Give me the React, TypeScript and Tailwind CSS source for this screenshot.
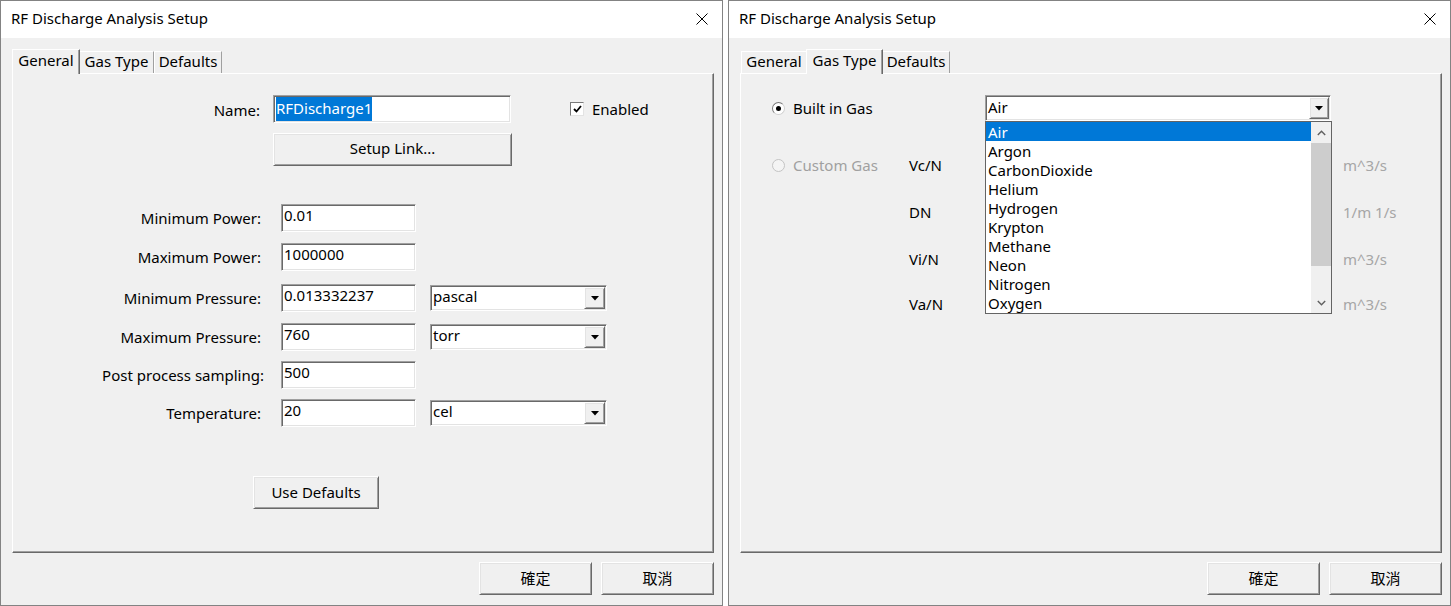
import React from 'react';

// classic win32 3d borders
const sunken =
  'border border-t-[#a0a0a0] border-l-[#a0a0a0] border-r-white border-b-white shadow-[inset_1px_1px_0_#696969,inset_-1px_-1px_0_#e3e3e3]';
const raised =
  'bg-[#f0f0f0] border border-t-white border-l-white border-r-[#696969] border-b-[#696969] shadow-[inset_1px_1px_0_#e3e3e3,inset_-1px_-1px_0_#a0a0a0]';

const Arrow = () => (
  <svg width="8" height="5" viewBox="0 0 8 5">
    <path d="M0 0h8L4 4.5z" fill="#000" />
  </svg>
);

const Field = ({ value, w }: { value: string; w: string }) => (
  <div className={`${sunken} bg-white h-[28px] ${w} pl-[2px] leading-[20px]`}>{value}</div>
);

const Select = ({ value }: { value: string }) => (
  <div className={`${sunken} bg-white h-[26px] w-[177px] flex p-[1px]`}>
    <span className="flex-1 pl-[1px] leading-[18px]">{value}</span>
    <span className={`${raised} w-[21px] flex items-center justify-center pt-[1px]`}>
      <Arrow />
    </span>
  </div>
);

const Radio = ({ checked, disabled }: { checked?: boolean; disabled?: boolean }) => (
  <span
    className={`w-[13px] h-[13px] rounded-full border flex items-center justify-center ${
      disabled ? 'border-[#c4c4c4] bg-[#f4f4f4]' : 'border-t-[#7a7a7a] border-l-[#7a7a7a] border-r-[#d0d0d0] border-b-[#d0d0d0] bg-white'
    }`}
  >
    {checked && <span className="w-[5px] h-[5px] rounded-full bg-black" />}
  </span>
);

function Tabs({ active }: { active: number }) {
  const base = 'h-[22px] border-t border-l border-white border-r border-r-[#a0a0a0] text-center leading-[19px]';
  const sel =
    'relative z-10 -mx-[1px] -mb-[1px] h-[25px] bg-[#f0f0f0] border-t border-l border-white border-r border-r-[#696969] shadow-[inset_-1px_0_0_#a0a0a0] text-center leading-[21px]';
  return (
    <div className="flex items-end h-[24px] pl-[1px]">
      <div className={active === 0 ? `${sel} w-[68px]` : `${base} w-[66px]`}>General</div>
      <div className={active === 1 ? `${sel} w-[77px]` : `${base} w-[75px]`}>Gas Type</div>
      <div className={active === 2 ? `${sel} w-[70px]` : `${base} w-[68px]`}>Defaults</div>
    </div>
  );
}

function Dialog({ active, children }: { active: number; children: React.ReactNode }) {
  return (
    <div className="w-[723px] h-[606px] border border-[#838383] bg-[#f0f0f0] flex flex-col shrink-0">
      <div className="h-[37px] bg-white flex items-center justify-between pl-[10px] pr-[14px] pb-[2px] text-[15px]">
        <span>RF Discharge Analysis Setup</span>
        <svg width="12" height="12" viewBox="0 0 12 12">
          <path d="M0.5 0.5l11 11M11.5 0.5l-11 11" stroke="#000" strokeWidth="1" />
        </svg>
      </div>
      <div className="pl-[11px] pr-[8px] pt-[11px]">
        <Tabs active={active} />
        <div className="relative h-[480px] border border-t-white border-l-white border-r-[#696969] border-b-[#696969] shadow-[inset_-1px_-1px_0_#a0a0a0]">
          {children}
        </div>
        <div className="flex justify-end gap-[9px] mt-[9px]">
          <button className={`${raised} w-[113px] h-[33px] leading-[20px] pb-[2px]`}>確定</button>
          <button className={`${raised} w-[113px] h-[33px] leading-[20px] pb-[2px]`}>取消</button>
        </div>
      </div>
    </div>
  );
}

const rows = [
  { label: 'Minimum Power:', value: '0.01', mt: 'mt-0' },
  { label: 'Maximum Power:', value: '1000000', mt: 'mt-[11px]' },
  { label: 'Minimum Pressure:', value: '0.013332237', unit: 'pascal', mt: 'mt-[13px]' },
  { label: 'Maximum Pressure:', value: '760', unit: 'torr', mt: 'mt-[11px]' },
  { label: 'Post process sampling:', value: '500', mt: 'mt-[10px]', wide: true },
  { label: 'Temperature:', value: '20', unit: 'cel', mt: 'mt-[10px]' },
];

function General() {
  return (
    <div className="pt-[21px]">
      <div className="flex items-center h-[28px]">
        <span className="w-[247px] text-right pt-[2px]">Name:</span>
        <div className={`${sunken} bg-white ml-[13px] w-[238px] h-[28px] pl-[2px] pt-[1px]`}>
          <span className="inline-block bg-[#0078d7] text-white leading-[22px] h-[24px]">RFDischarge1</span>
        </div>
        <span className="ml-[59px] w-[14px] h-[14px] bg-white border border-t-[#7a7a7a] border-l-[#7a7a7a] border-r-[#e3e3e3] border-b-[#e3e3e3] flex items-center justify-center">
          <svg width="9" height="8" viewBox="0 0 9 8">
            <path d="M1 4l2.5 2.5L8 1" stroke="#000" strokeWidth="1.8" fill="none" />
          </svg>
        </span>
        <span className="ml-[8px]">Enabled</span>
      </div>
      <button className={`${raised} ml-[260px] mt-[10px] w-[239px] h-[33px] leading-[20px] pb-[3px]`}>Setup Link...</button>
      <div className="mt-[38px] flex flex-col">
        {rows.map((r) => (
          <div key={r.label} className={`flex items-center h-[28px] ${r.mt}`}>
            <span className={`text-right whitespace-nowrap ${r.wide ? 'w-[251px] -mr-[3px]' : 'w-[248px]'}`}>{r.label}</span>
            <div className="ml-[20px]">
              <Field value={r.value} w="w-[135px]" />
            </div>
            {r.unit && (
              <div className="ml-[14px]">
                <Select value={r.unit} />
              </div>
            )}
          </div>
        ))}
      </div>
      <button className={`${raised} ml-[240px] mt-[49px] w-[126px] h-[33px] leading-[20px] pb-[2px]`}>Use Defaults</button>
    </div>
  );
}

const gases = ['Air', 'Argon', 'CarbonDioxide', 'Helium', 'Hydrogen', 'Krypton', 'Methane', 'Neon', 'Nitrogen', 'Oxygen'];

const customRows = [
  { label: 'Vc/N', unit: 'm^3/s', mt: 'mt-[31px]', radio: true },
  { label: 'DN', unit: '1/m 1/s', mt: 'mt-[21px]' },
  { label: 'Vi/N', unit: 'm^3/s', mt: 'mt-[21px]' },
  { label: 'Va/N', unit: 'm^3/s', mt: 'mt-[19px]' },
];

function GasType() {
  return (
    <div className="pt-[21px] pl-[31px]">
      <div className="flex items-center h-[26px]">
        <div className="w-[213px] flex items-center">
          <Radio checked />
          <span className="ml-[8px]">Built in Gas</span>
        </div>
        <div className="relative">
          <div className={`${sunken} bg-white h-[26px] w-[346px] flex p-[1px]`}>
            <span className="flex-1 pl-[1px] leading-[20px]">Air</span>
            <span className={`${raised} w-[20px] flex items-center justify-center pt-[1px]`}>
              <Arrow />
            </span>
          </div>
          <div className="absolute z-20 left-0 top-[26px] w-[347px] h-[193px] bg-white border border-[#646464] flex">
            <div className="flex-1 flex flex-col">
              {gases.map((g, i) => (
                <div
                  key={g}
                  className={`h-[19px] leading-[21px] pl-[2px] ${i === 0 ? 'bg-[#0078d7] text-white' : ''}`}
                >
                  {g}
                </div>
              ))}
            </div>
            <div className="w-[20px] bg-[#f0f0f0] flex flex-col">
              <div className="h-[21px] flex items-center justify-center">
                <svg width="9" height="6" viewBox="0 0 9 6">
                  <path d="M0.8 5L4.5 1.2 8.2 5" stroke="#606060" strokeWidth="1.4" fill="none" />
                </svg>
              </div>
              <div className="h-[123px] bg-[#cdcdcd]" />
              <div className="flex-1" />
              <div className="h-[21px] flex items-center justify-center">
                <svg width="9" height="6" viewBox="0 0 9 6">
                  <path d="M0.8 1L4.5 4.8 8.2 1" stroke="#606060" strokeWidth="1.4" fill="none" />
                </svg>
              </div>
            </div>
          </div>
        </div>
      </div>
      {customRows.map((r) => (
        <div key={r.label} className={`flex items-center h-[26px] ${r.mt}`}>
          <div className="w-[137px] flex items-center">
            {r.radio && (
              <>
                <Radio disabled />
                <span className="ml-[8px] text-[#a0a0a0]">Custom Gas</span>
              </>
            )}
          </div>
          <span className="w-[76px]">{r.label}</span>
          <span className="w-[346px]" />
          <span className="ml-[12px] text-[#a6a6a6]">{r.unit}</span>
        </div>
      ))}
    </div>
  );
}

export default function App() {
  return (
    <div className="w-[1451px] h-[606px] flex bg-white text-black text-[15px] font-['Noto_Sans','Noto_Sans_CJK_TC',sans-serif] overflow-hidden">
      <Dialog active={0}>
        <General />
      </Dialog>
      <div className="w-[5px] shrink-0 bg-white" />
      <Dialog active={1}>
        <GasType />
      </Dialog>
    </div>
  );
}
